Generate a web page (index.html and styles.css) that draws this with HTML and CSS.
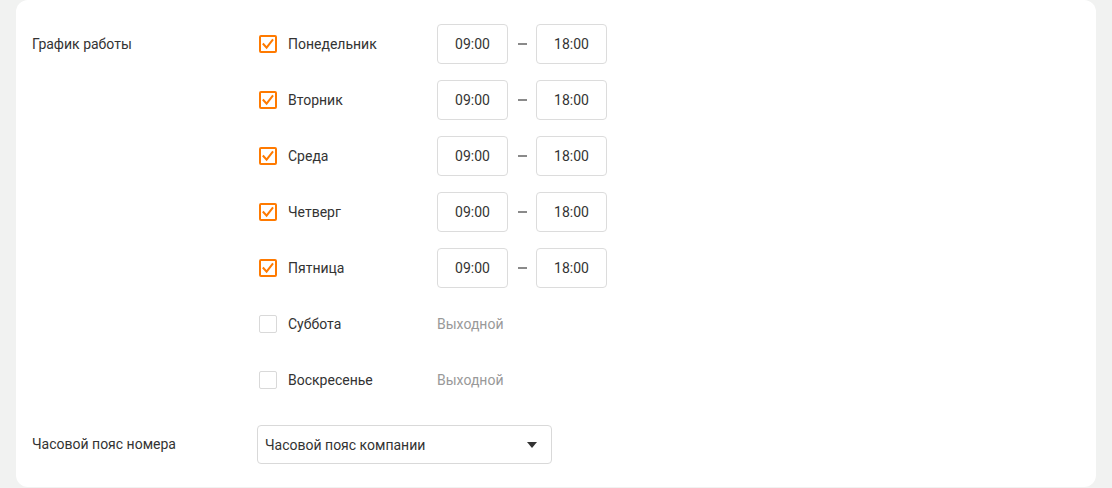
FILE: index.html
```html
<!DOCTYPE html>
<html lang="ru">
<head>
<meta charset="utf-8">
<link rel="stylesheet" href="styles.css">
</head>
<body>
<div class="card">
  <div class="section">
    <div class="label">График работы</div>
    <div class="days">
      <div class="row">
        <span class="cb on"><svg viewBox="0 0 18 18"><path d="M4.5 9.2 L7.6 12.6 L13.4 5.2"/></svg></span>
        <span class="day">Понедельник</span>
        <span class="time">09:00</span><span class="dash"></span><span class="time">18:00</span>
      </div>
      <div class="row">
        <span class="cb on"><svg viewBox="0 0 18 18"><path d="M4.5 9.2 L7.6 12.6 L13.4 5.2"/></svg></span>
        <span class="day">Вторник</span>
        <span class="time">09:00</span><span class="dash"></span><span class="time">18:00</span>
      </div>
      <div class="row">
        <span class="cb on"><svg viewBox="0 0 18 18"><path d="M4.5 9.2 L7.6 12.6 L13.4 5.2"/></svg></span>
        <span class="day">Среда</span>
        <span class="time">09:00</span><span class="dash"></span><span class="time">18:00</span>
      </div>
      <div class="row">
        <span class="cb on"><svg viewBox="0 0 18 18"><path d="M4.5 9.2 L7.6 12.6 L13.4 5.2"/></svg></span>
        <span class="day">Четверг</span>
        <span class="time">09:00</span><span class="dash"></span><span class="time">18:00</span>
      </div>
      <div class="row">
        <span class="cb on"><svg viewBox="0 0 18 18"><path d="M4.5 9.2 L7.6 12.6 L13.4 5.2"/></svg></span>
        <span class="day">Пятница</span>
        <span class="time">09:00</span><span class="dash"></span><span class="time">18:00</span>
      </div>
      <div class="row">
        <span class="cb"></span>
        <span class="day">Суббота</span>
        <span class="off">Выходной</span>
      </div>
      <div class="row">
        <span class="cb"></span>
        <span class="day">Воскресенье</span>
        <span class="off">Выходной</span>
      </div>
    </div>
  </div>
  <div class="section tz">
    <div class="label">Часовой пояс номера</div>
    <div class="select">
      <span>Часовой пояс компании</span>
      <span class="arrow"></span>
    </div>
  </div>
</div>
</body>
</html>
```

FILE: styles.css
```css
* { box-sizing: border-box; }
html, body { margin: 0; padding: 0; }
body {
  background: #f1f2f1;
  font-family: Roboto, "Liberation Sans", sans-serif;
  font-size: 14px;
  color: #333;
  width: 1112px;
  height: 488px;
  overflow: hidden;
}
.card {
  margin-left: 16px;
  width: 1080px;
  height: 487px;
  background: #fff;
  border-radius: 12px;
  padding: 24px 16px 0 16px;
}
.section {
  display: flex;
  align-items: flex-start;
}
.label {
  width: 225px;
  height: 40px;
  line-height: 40px;
}
.days {
  display: flex;
  flex-direction: column;
  gap: 16px;
}
.row {
  display: flex;
  align-items: center;
  height: 40px;
}
.cb {
  width: 18px;
  height: 18px;
  margin-left: 2px;
  border: 1px solid #d9d9d9;
  border-radius: 2px;
  display: flex;
}
.cb.on {
  border: 2px solid #ff7a00;
}
.cb svg {
  width: 18px;
  height: 18px;
  margin: -2px;
  fill: none;
  stroke: #ff7a00;
  stroke-width: 2;
  stroke-linecap: square;
}
.day {
  width: 149px;
  margin-left: 11px;
}
.off {
  color: #999;
}
.time {
  width: 71px;
  height: 40px;
  border: 1px solid #dcdcdc;
  border-radius: 4px;
  display: flex;
  align-items: center;
  justify-content: center;
}
.dash {
  width: 9px;
  height: 2px;
  background: #8a8a8a;
  margin: 0 9px 0 10px;
}
.tz {
  margin-top: 25px;
}
.tz .label {
  height: 38px;
  line-height: 38px;
}
.select {
  width: 295px;
  height: 39px;
  border: 1px solid #d9d9d9;
  border-radius: 4px;
  display: flex;
  align-items: center;
  justify-content: space-between;
  padding: 0 14px 0 7px;
}
.arrow {
  width: 0;
  height: 0;
  border-left: 5px solid transparent;
  border-right: 5px solid transparent;
  border-top: 6px solid #333;
}
```
